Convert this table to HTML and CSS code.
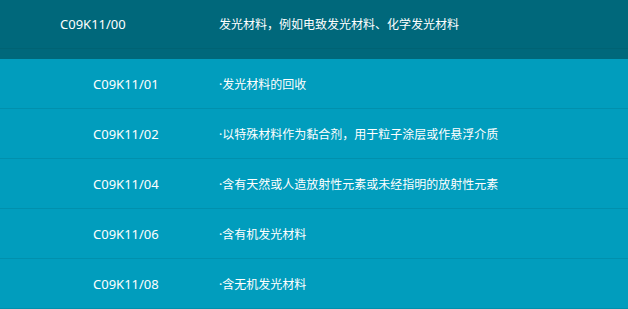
FILE: index.html
```html
<!DOCTYPE html>
<html lang="zh-CN">

<head>
    <meta charset="UTF-8">
    <meta name="viewport" content="width=device-width, initial-scale=1.0">
    <title>C09K11 分类</title>
    <link rel="stylesheet" href="styles.css">
</head>

<body>
    <div class="table">
        <div class="head">
            <div class="row main">
                <span class="code">C09K11/00</span>
                <span class="desc">发光材料，例如电致发光材料、化学发光材料</span>
            </div>
        </div>
        <div class="body">
            <div class="row sub">
                <span class="code">C09K11/01</span>
                <span class="desc">·发光材料的回收</span>
            </div>
            <div class="row sub">
                <span class="code">C09K11/02</span>
                <span class="desc">·以特殊材料作为黏合剂，用于粒子涂层或作悬浮介质</span>
            </div>
            <div class="row sub">
                <span class="code">C09K11/04</span>
                <span class="desc">·含有天然或人造放射性元素或未经指明的放射性元素</span>
            </div>
            <div class="row sub">
                <span class="code">C09K11/06</span>
                <span class="desc">·含有机发光材料</span>
            </div>
            <div class="row sub">
                <span class="code">C09K11/08</span>
                <span class="desc">·含无机发光材料</span>
            </div>
        </div>
    </div>
</body>

</html>
```

FILE: styles.css
```css
body {
    margin: 0;
    padding: 0;
    background-color: #019dbd;
    font-family: "Noto Sans", "Noto Sans CJK SC", sans-serif;
    color: #fff;
}

.table {
    width: 100%;
}

.head {
    background-color: #00687b;
    padding-bottom: 10px;
}

.body {
    background-color: #019dbd;
}

.row {
    display: flex;
    align-items: center;
    height: 49px;
    border-bottom: 1px solid #0190ad;
}

.main {
    height: 48px;
    padding-left: 60px;
    border-bottom-color: #006374;
}

.main .code {
    width: 159px;
}

.sub {
    padding-left: 93px;
}

.sub .code {
    width: 126px;
}

.code {
    font-size: 13px;
}

/* latin first so the leading dot stays narrow */
.desc {
    font-size: 12px;
    font-family: "Noto Sans", "Noto Sans CJK SC", sans-serif;
}
```
